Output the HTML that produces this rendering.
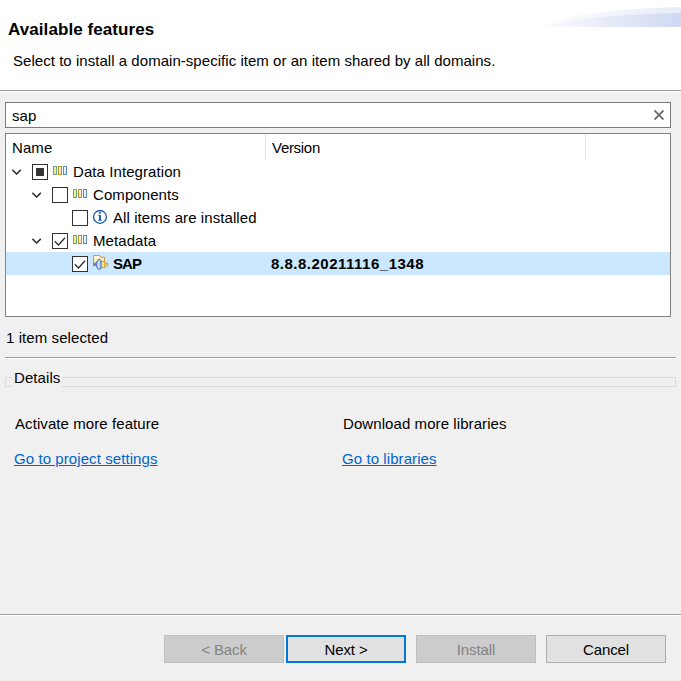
<!DOCTYPE html>
<html><head><meta charset="utf-8">
<style>
*{margin:0;padding:0;box-sizing:border-box}
html,body{width:681px;height:681px;overflow:hidden;background:#f0f0f0;font-family:"Liberation Sans",sans-serif;color:#000}
.a{position:absolute}
.t{position:absolute;font-size:15px;line-height:20px;white-space:nowrap;letter-spacing:0.08px}
#hdr{left:0;top:0;width:681px;height:90px;background:#fff}
#hl1{left:0;top:90px;width:681px;height:1px;background:#a0a0a0}
#hl2{left:0;top:91px;width:681px;height:1px;background:#fff}
#search{left:5px;top:102px;width:666px;height:26px;background:#fff;border:1px solid #7a7a7a}
#tree{left:5px;top:133px;width:666px;height:184px;background:#fff;border:1px solid #828282}
.sep{width:1px;background:#e5e5e5}
.cb{position:absolute;width:16px;height:16px;border:1px solid #333;background:#fff}
.chev{position:absolute}
.lnk{color:#0066cc;text-decoration:underline}
.btn{position:absolute;top:635px;width:120px;height:28px;background:#e1e1e1;border:1px solid #adadad;text-align:center;font-size:15px;line-height:28px;letter-spacing:-0.1px}
.dis{background:#cccccc;border-color:#bfbfbf;color:#838383}
</style></head><body>
<svg width="0" height="0" style="position:absolute"><defs>
<linearGradient id="gy" x1="0" x2="0" y1="0" y2="1"><stop offset="0" stop-color="#f8ef96"/><stop offset="1" stop-color="#e6e79a"/></linearGradient>
<linearGradient id="go" x1="0" x2="0" y1="0" y2="1"><stop offset="0" stop-color="#fffef6"/><stop offset="1" stop-color="#fcd6a4"/></linearGradient>
<linearGradient id="gb" x1="0" x2="0" y1="0" y2="1"><stop offset="0" stop-color="#f6f9fd"/><stop offset="1" stop-color="#d6eae6"/></linearGradient>
</defs></svg>
<div id="hdr" class="a"></div>
<div id="hl1" class="a"></div>
<div id="hl2" class="a"></div>
<svg class="a" style="left:530px;top:0" width="151" height="40" viewBox="0 0 151 40">
<defs>
<linearGradient id="g1" x1="0" x2="1" y1="0" y2="0"><stop offset="0" stop-color="#ffffff"/><stop offset="1" stop-color="#e6ebf8"/></linearGradient>
<linearGradient id="g2" x1="0" x2="1" y1="0" y2="0"><stop offset="0" stop-color="#fbfcfe"/><stop offset="1" stop-color="#d0d9f3"/></linearGradient>
</defs>
<path d="M11 27 Q40 10 151 7 L151 27 Z" fill="url(#g1)"/>
<path d="M11 27 Q50 15 151 13 L151 27 Z" fill="url(#g2)"/>
</svg>
<div class="t" style="left:8px;top:20px;font-size:17px;font-weight:bold">Available features</div>
<div class="t" style="left:13px;top:51px;letter-spacing:0.04px">Select to install a domain-specific item or an item shared by all domains.</div>

<div id="search" class="a"></div>
<div class="t" style="left:12px;top:106px">sap</div>
<svg class="a" style="left:654px;top:110px" width="10" height="10" viewBox="0 0 10 10"><path d="M0.5 0.5 L9.5 9.5 M9.5 0.5 L0.5 9.5" stroke="#6a6a6a" stroke-width="1.9"/></svg>

<div id="tree" class="a"></div>
<div class="a sep" style="left:265px;top:134px;height:26px"></div>
<div class="a sep" style="left:585px;top:134px;height:26px"></div>
<div class="t" style="left:12px;top:138px">Name</div>
<div class="t" style="left:272px;top:138px;letter-spacing:-0.3px">Version</div>

<div class="a" style="left:6px;top:252px;width:664px;height:23px;background:#cce8ff"></div>

<!-- row 1 -->
<svg class="a" style="left:12px;top:169px" width="10" height="6" viewBox="0 0 10 6"><path d="M0.4 0.9 L4.6 5 L8.8 0.9" fill="none" stroke="#2b2b2b" stroke-width="1.5"/></svg>
<div class="cb" style="left:32px;top:164px"></div>
<div class="a" style="left:36px;top:168px;width:8px;height:8px;background:#333"></div>
<svg class="a" style="left:53px;top:166px" width="14" height="9" viewBox="0 0 14 9">
<rect x="0.5" y="0.5" width="3" height="8" fill="url(#gy)" stroke="#6aa88e"/>
<rect x="5.5" y="0.5" width="3" height="8" fill="url(#go)" stroke="#b8921e"/>
<rect x="10.5" y="0.5" width="3" height="8" fill="url(#gb)" stroke="#6088c4"/>
</svg>
<div class="t" style="left:73px;top:162px">Data Integration</div>

<!-- row 2 -->
<svg class="a" style="left:32px;top:192px" width="10" height="6" viewBox="0 0 10 6"><path d="M0.4 0.9 L4.6 5 L8.8 0.9" fill="none" stroke="#2b2b2b" stroke-width="1.5"/></svg>
<div class="cb" style="left:52px;top:187px"></div>
<svg class="a" style="left:73px;top:189px" width="14" height="9" viewBox="0 0 14 9">
<rect x="0.5" y="0.5" width="3" height="8" fill="url(#gy)" stroke="#6aa88e"/>
<rect x="5.5" y="0.5" width="3" height="8" fill="url(#go)" stroke="#b8921e"/>
<rect x="10.5" y="0.5" width="3" height="8" fill="url(#gb)" stroke="#6088c4"/>
</svg>
<div class="t" style="left:93px;top:185px">Components</div>

<!-- row 3 -->
<div class="cb" style="left:72px;top:210px"></div>
<svg class="a" style="left:92px;top:210px" width="16" height="16" viewBox="0 0 16 16">
<circle cx="8" cy="6.9" r="6.4" fill="none" stroke="#0f52a4" stroke-width="1.25"/>
<rect x="6.9" y="2.2" width="1.9" height="1.6" fill="#0f52a4"/>
<path d="M6.2 5 H8.9 V9.8 H9.8 V10.7 H6.2 V9.8 H7.1 V5.8 H6.2 Z" fill="#0f52a4"/>
</svg>
<div class="t" style="left:113px;top:208px">All items are installed</div>

<!-- row 4 -->
<svg class="a" style="left:32px;top:238px" width="10" height="6" viewBox="0 0 10 6"><path d="M0.4 0.9 L4.6 5 L8.8 0.9" fill="none" stroke="#2b2b2b" stroke-width="1.5"/></svg>
<div class="cb" style="left:52px;top:233px"></div>
<svg class="a" style="left:52px;top:233px" width="16" height="16" viewBox="0 0 16 16"><path d="M2.8 8.3 L6.5 12 L13 4.8" fill="none" stroke="#2b2b2b" stroke-width="1.3"/></svg>
<svg class="a" style="left:73px;top:235px" width="14" height="9" viewBox="0 0 14 9">
<rect x="0.5" y="0.5" width="3" height="8" fill="url(#gy)" stroke="#6aa88e"/>
<rect x="5.5" y="0.5" width="3" height="8" fill="url(#go)" stroke="#b8921e"/>
<rect x="10.5" y="0.5" width="3" height="8" fill="url(#gb)" stroke="#6088c4"/>
</svg>
<div class="t" style="left:93px;top:231px">Metadata</div>

<!-- row 5 -->
<div class="cb" style="left:72px;top:256px"></div>
<svg class="a" style="left:72px;top:256px" width="16" height="16" viewBox="0 0 16 16"><path d="M2.8 8.3 L6.5 12 L13 4.8" fill="none" stroke="#2b2b2b" stroke-width="1.3"/></svg>
<svg class="a" style="left:92px;top:254px" width="18" height="18" viewBox="0 0 18 18">
<defs><linearGradient id="bl" x1="0" x2="1"><stop offset="0" stop-color="#7d9bd6"/><stop offset="0.5" stop-color="#dfe7f5"/><stop offset="1" stop-color="#6f8fd0"/></linearGradient></defs>
<path d="M1.5 9 V1.5 H7.5 L8.5 3.2 H12.5 V9 Z" fill="#fcefc0" stroke="#d4944a" stroke-width="1"/>
<rect x="2.5" y="2.3" width="4.5" height="1.2" fill="#fffdf4"/>
<rect x="1" y="9.2" width="3.2" height="2.6" fill="#5d80c8"/>
<path d="M4.2 9.6 Q5.2 5.2 7.8 5.2 Q9.3 5.2 9.3 10.4 Q9.3 15.6 7.8 15.6 Q5.2 15.6 4.2 11.4 Z" fill="url(#bl)" stroke="#3d69be" stroke-width="1"/>
<rect x="9.6" y="7.6" width="3.4" height="6" fill="#fbe7a0" stroke="#cf9d22" stroke-width="1"/>
<rect x="13" y="9.2" width="2.8" height="2.6" fill="#f6d16e" stroke="#cf9d22" stroke-width="0.8"/>
</svg>
<div class="t" style="left:113px;top:254px;font-weight:bold;letter-spacing:-0.9px">SAP</div>
<div class="t" style="left:271px;top:254px;font-weight:bold;letter-spacing:0.5px">8.8.8.20211116_1348</div>

<div class="t" style="left:6px;top:328px">1 item selected</div>
<div class="a" style="left:5px;top:357px;width:671px;height:1px;background:#a0a0a0"></div>
<div class="a" style="left:5px;top:358px;width:671px;height:1px;background:#fff"></div>

<div class="a" style="left:5px;top:377px;width:671px;height:10px;border:1px solid #dcdcdc"></div>
<div class="t" style="left:12px;top:368px;padding:0 2px;background:#f0f0f0">Details</div>

<div class="t" style="left:15px;top:414px">Activate more feature</div>
<div class="t" style="left:343px;top:414px">Download more libraries</div>
<div class="t lnk" style="left:14px;top:449px">Go to project settings</div>
<div class="t lnk" style="left:342px;top:449px">Go to libraries</div>

<div class="a" style="left:0;top:614px;width:681px;height:1px;background:#a0a0a0"></div>
<div class="a" style="left:0;top:615px;width:681px;height:1px;background:#fff"></div>

<div class="btn dis" style="left:164px">&lt; Back</div>
<div class="btn" style="left:286px;border:2px solid #0078d7;line-height:26px">Next &gt;</div>
<div class="btn dis" style="left:416px">Install</div>
<div class="btn" style="left:546px">Cancel</div>
</body></html>
